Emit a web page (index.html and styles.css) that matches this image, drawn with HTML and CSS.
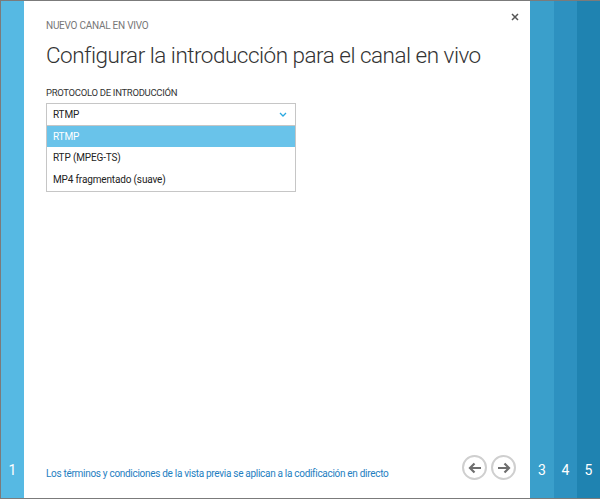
FILE: index.html
```html
<!DOCTYPE html>
<html lang="es">
<head>
<meta charset="utf-8">
<link rel="stylesheet" href="styles.css">
</head>
<body>
<div class="frame">
  <div class="strip strip-1"><span class="num">1</span></div>
  <div class="main">
    <button class="close" aria-label="Cerrar">
      <svg width="8" height="8" viewBox="0 0 8 8"><path d="M1 1 L7 7 M7 1 L1 7" stroke="#555" stroke-width="1.5" fill="none"/></svg>
    </button>
    <div class="eyebrow">NUEVO CANAL EN VIVO</div>
    <h1 class="title">Configurar la introducción para el canal en vivo</h1>
    <div class="field-label">PROTOCOLO DE INTRODUCCIÓN</div>
    <div class="select">
      <div class="select-box">
        <span>RTMP</span>
        <svg class="chev" width="8" height="5" viewBox="0 0 8 5"><path d="M1 1 L4 4 L7 1" stroke="#29a8e0" stroke-width="1.3" fill="none"/></svg>
      </div>
      <ul class="options">
        <li class="opt selected">RTMP</li>
        <li class="opt">RTP (MPEG-TS)</li>
        <li class="opt">MP4 fragmentado (suave)</li>
      </ul>
    </div>
    <div class="spacer"></div>
    <div class="footer">
      <a class="terms" href="#">Los términos y condiciones de la vista previa se aplican a la codificación en directo</a>
      <div class="nav">
        <span class="circle">
          <svg width="14" height="12" viewBox="0 0 14 12"><path d="M13 6 H2 M6.5 1.5 L2 6 L6.5 10.5" stroke="#6e6e6e" stroke-width="2.2" fill="none"/></svg>
        </span>
        <span class="circle">
          <svg width="14" height="12" viewBox="0 0 14 12"><path d="M1 6 H12 M7.5 1.5 L12 6 L7.5 10.5" stroke="#6e6e6e" stroke-width="2.2" fill="none"/></svg>
        </span>
      </div>
    </div>
  </div>
  <div class="strip strip-3"><span class="num">3</span></div>
  <div class="strip strip-4"><span class="num">4</span></div>
  <div class="strip strip-5"><span class="num">5</span></div>
</div>
</body>
</html>
```
FILE: styles.css
```css
* { box-sizing: border-box; }
html, body { margin: 0; padding: 0; }
body {
  width: 600px;
  height: 499px;
  font-family: Roboto, "Open Sans", sans-serif;
  background: #fff;
  overflow: hidden;
}
.frame {
  display: flex;
  width: 600px;
  height: 499px;
  border-top: 1px solid #7b7b7b;
  border-left: 1px solid #7b7b7b;
  border-bottom: 1px solid #7b7b7b;
}
.strip {
  flex-shrink: 0;
  display: flex;
  align-items: flex-end;
  justify-content: center;
  padding-bottom: 20px;
  color: #fff;
  font-size: 14px;
}
.strip-1 { width: 23px; background: #56b9e3; }
.strip-3 { width: 24px; background: #3a9fcb; }
.strip-4 { width: 23px; background: #2d91c0; }
.strip-5 { width: 23px; background: #1f83b1; }
.num { line-height: 16px; }
.main {
  position: relative;
  flex: 1;
  min-width: 0;
  display: flex;
  flex-direction: column;
  padding: 18px 0 18px 22px;
}
.close {
  position: absolute;
  top: 12px;
  right: 11px;
  border: 0;
  background: none;
  padding: 0;
  width: 8px;
  height: 8px;
  display: flex;
}
.eyebrow {
  font-size: 10px;
  letter-spacing: -0.25px;
  color: #777;
  line-height: 13px;
}
.title {
  margin: 8px 0 0;
  font-size: 22.5px;
  letter-spacing: -0.5px;
  font-weight: 300;
  color: #333;
  line-height: 30px;
  white-space: nowrap;
}
.field-label {
  margin-top: 16px;
  font-size: 9.5px;
  letter-spacing: -0.3px;
  color: #333;
  line-height: 13px;
}
.select {
  margin-top: 4px;
  width: 250px;
  border: 1px solid #c6c6c6;
}
.select-box {
  height: 22px;
  display: flex;
  align-items: center;
  justify-content: space-between;
  padding: 0 8px 0 6px;
  font-size: 10px;
  letter-spacing: -0.15px;
  color: #222;
  border-bottom: 1px solid #c6c6c6;
}
.chev { display: block; }
.options { list-style: none; margin: 0; padding: 0; }
.opt {
  height: 22px;
  line-height: 22px;
  padding-left: 6px;
  font-size: 10px;
  letter-spacing: -0.15px;
  color: #222;
}
.opt.selected { height: 21px; line-height: 21px; background: #69c3ea; color: #fff; }
.spacer { flex: 1; }
.footer {
  display: flex;
  align-items: center;
  justify-content: space-between;
  padding-right: 14px;
}
.terms {
  font-size: 10px;
  letter-spacing: -0.3px;
  color: #1e7ec1;
  text-decoration: none;
  margin-top: 12px;
}
.nav { display: flex; gap: 4px; }
.circle {
  width: 25px;
  height: 25px;
  border: 2px solid #cfcfcf;
  border-radius: 50%;
  display: flex;
  align-items: center;
  justify-content: center;
}
```
